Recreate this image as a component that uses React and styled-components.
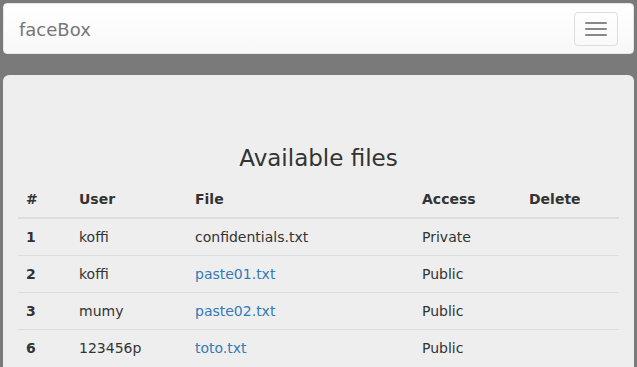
import styled, { createGlobalStyle } from "styled-components";

const GlobalStyle = createGlobalStyle`
    body{
        margin: 0;
        background: #7a7a7a;
        font-family: "DejaVu Sans", Verdana, sans-serif;
        font-size: 14px;
        color: #333;
    }
`

const Page = styled.div`
    padding: 3px 3px 0 3px;
`

const Navbar = styled.nav`
    display: flex;
    justify-content: space-between;
    align-items: center;
    height: 51px;
    padding: 0 15px;
    margin-bottom: 21px;
    background: linear-gradient(to bottom, #ffffff 0%, #f8f8f8 100%);
    border: 1px solid #e7e7e7;
    border-radius: 4px;
    box-sizing: border-box;
    .brand{
        font-size: 18px;
        color: #777;
        text-decoration: none;
        padding-top: 2px;
    }
`

const Toggle = styled.button`
    display: flex;
    flex-direction: column;
    justify-content: center;
    gap: 4px;
    width: 44px;
    height: 34px;
    padding: 9px 10px;
    margin-top: 1px;
    background: transparent;
    border: 1px solid #ddd;
    border-radius: 4px;
    box-sizing: border-box;
    >span{
        display: block;
        width: 22px;
        height: 2px;
        border-radius: 1px;
        background: #888;
    }
`

const Panel = styled.section`
    background: #eee;
    border-radius: 6px 6px 0 0;
    padding: 70px 15px 0 15px;
    min-height: 300px;
    h3{
        margin: 0 0 10px 0;
        font-size: 23px;
        font-weight: 500;
        line-height: 26px;
        text-align: center;
    }
`

const Table = styled.table`
    width: 100%;
    border-collapse: collapse;
    th, td{
        box-sizing: border-box;
        padding: 8px;
        line-height: 20px;
        text-align: left;
        vertical-align: top;
        border-top: 1px solid #ddd;
    }
    th{
        border-top: none;
        border-bottom: 2px solid #ddd;
        font-weight: bold;
    }
    th:nth-child(1){ width: 53px; }
    th:nth-child(2){ width: 116px; }
    th:nth-child(3){ width: 227px; }
    th:nth-child(4){ width: 107px; }
    td:first-child{
        font-weight: bold;
    }
    a{
        color: #337ab7;
        text-decoration: none;
    }
`

const files = [
    { id: 1, user: "koffi", file: "confidentials.txt", access: "Private", link: false },
    { id: 2, user: "koffi", file: "paste01.txt", access: "Public", link: true },
    { id: 3, user: "mumy", file: "paste02.txt", access: "Public", link: true },
    { id: 6, user: "123456p", file: "toto.txt", access: "Public", link: true },
];

const App = () => {
    return (
        <Page>
            <GlobalStyle />
            <Navbar>
                <a className="brand" href="#">faceBox</a>
                <Toggle aria-label="menu">
                    <span></span>
                    <span></span>
                    <span></span>
                </Toggle>
            </Navbar>
            <Panel>
                <h3>Available files</h3>
                <Table>
                    <thead>
                        <tr>
                            <th>#</th>
                            <th>User</th>
                            <th>File</th>
                            <th>Access</th>
                            <th>Delete</th>
                        </tr>
                    </thead>
                    <tbody>
                        {files.map(f => (
                            <tr key={f.id}>
                                <td>{f.id}</td>
                                <td>{f.user}</td>
                                <td>{f.link ? <a href="#">{f.file}</a> : f.file}</td>
                                <td>{f.access}</td>
                                <td></td>
                            </tr>
                        ))}
                    </tbody>
                </Table>
            </Panel>
        </Page>
    );
}

export default App;
